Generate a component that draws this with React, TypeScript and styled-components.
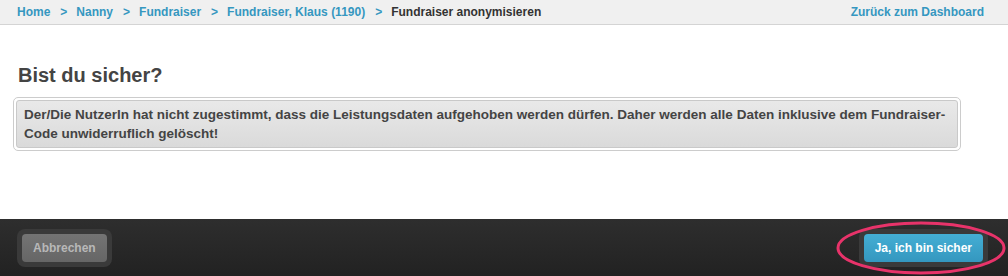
import React from 'react';
import styled, { createGlobalStyle } from 'styled-components';

const GlobalStyle = createGlobalStyle`
  html, body {
    margin: 0;
    padding: 0;
    height: 100%;
    background: #ffffff;
  }
  #root {
    height: 100%;
  }
  body {
    font-family: 'Liberation Sans', Arial, sans-serif;
  }
`;

const Page = styled.div`
  display: flex;
  flex-direction: column;
  min-height: 100vh;
`;

const Header = styled.div`
  height: 24px;
  display: flex;
  align-items: center;
  justify-content: space-between;
  padding: 0 24px 0 17px;
  background: #f0f0f0;
  border-bottom: 1px solid #d4d4d4;
  font-size: 12px;
  font-weight: bold;
`;

const Crumbs = styled.nav`
  display: flex;
  align-items: center;
`;

const CrumbLink = styled.a`
  color: #3597c0;
  text-decoration: none;
`;

const CrumbCurrent = styled.span`
  color: #333333;
`;

const Sep = styled.span`
  color: #3597c0;
  margin: 0 9px 0 10px;
  font-size: 12px;
`;

const Content = styled.main`
  padding: 38px 48px 0 13px;
`;

const Title = styled.h1`
  margin: 0 0 10px 5px;
  font-size: 20px;
  line-height: 24px;
  color: #444444;
  font-weight: bold;
`;

const MessageFrame = styled.div`
  box-sizing: border-box;
  width: 948px;
  padding: 2px;
  border: 1px solid #cccccc;
  border-radius: 5px;
  background: #ffffff;
`;

const Message = styled.div`
  border: 1px solid #c9c9c9;
  border-radius: 3px;
  background: linear-gradient(#e9e9e9, #dadada);
  padding: 4px 10px 4px 7px;
  font-size: 13.5px;
  line-height: 19px;
  font-weight: bold;
  color: #444444;
`;

const Footer = styled.footer`
  margin-top: auto;
  height: 57px;
  background: linear-gradient(#2e2e2e, #222222);
  display: flex;
  align-items: center;
  justify-content: space-between;
  padding: 0 20px 0 17px;
`;

const ButtonWell = styled.div`
  padding: 5px;
  background: #3a3a3a;
  border-radius: 8px;
  position: relative;
`;

const Button = styled.button<{ primary?: boolean }>`
  display: block;
  height: 28px;
  border: none;
  border-radius: 4px;
  font-family: 'Liberation Sans', Arial, sans-serif;
  font-size: 12px;
  font-weight: bold;
  padding: 0 11px;
  color: ${({ primary }) => (primary ? '#ffffff' : '#b8b8b8')};
  background: ${({ primary }) =>
    primary ? 'linear-gradient(#44aed4, #3497bf)' : 'linear-gradient(#747474, #666666)'};
  cursor: pointer;
`;

const Highlight = styled.svg`
  position: absolute;
  right: -18px;
  top: -8px;
  overflow: visible;
  pointer-events: none;
`;

export default function App() {
  return (
    <>
      <GlobalStyle />
      <Page>
        <Header>
          <Crumbs>
            <CrumbLink href="#">Home</CrumbLink>
            <Sep>&gt;</Sep>
            <CrumbLink href="#">Nanny</CrumbLink>
            <Sep>&gt;</Sep>
            <CrumbLink href="#">Fundraiser</CrumbLink>
            <Sep>&gt;</Sep>
            <CrumbLink href="#">Fundraiser, Klaus (1190)</CrumbLink>
            <Sep>&gt;</Sep>
            <CrumbCurrent>Fundraiser anonymisieren</CrumbCurrent>
          </Crumbs>
          <CrumbLink href="#">Zurück zum Dashboard</CrumbLink>
        </Header>
        <Content>
          <Title>Bist du sicher?</Title>
          <MessageFrame>
            <Message>
              Der/Die NutzerIn hat nicht zugestimmt, dass die Leistungsdaten aufgehoben werden dürfen. Daher werden alle Daten inklusive dem Fundraiser-Code unwiderruflich gelöscht!
            </Message>
          </MessageFrame>
        </Content>
        <Footer>
          <ButtonWell>
            <Button>Abbrechen</Button>
          </ButtonWell>
          <ButtonWell>
            <Button primary>Ja, ich bin sicher</Button>
            <Highlight width="170" height="54">
              <ellipse cx="85" cy="27" rx="83" ry="25" fill="none" stroke="#e8336a" strokeWidth="3" />
            </Highlight>
          </ButtonWell>
        </Footer>
      </Page>
    </>
  );
}
